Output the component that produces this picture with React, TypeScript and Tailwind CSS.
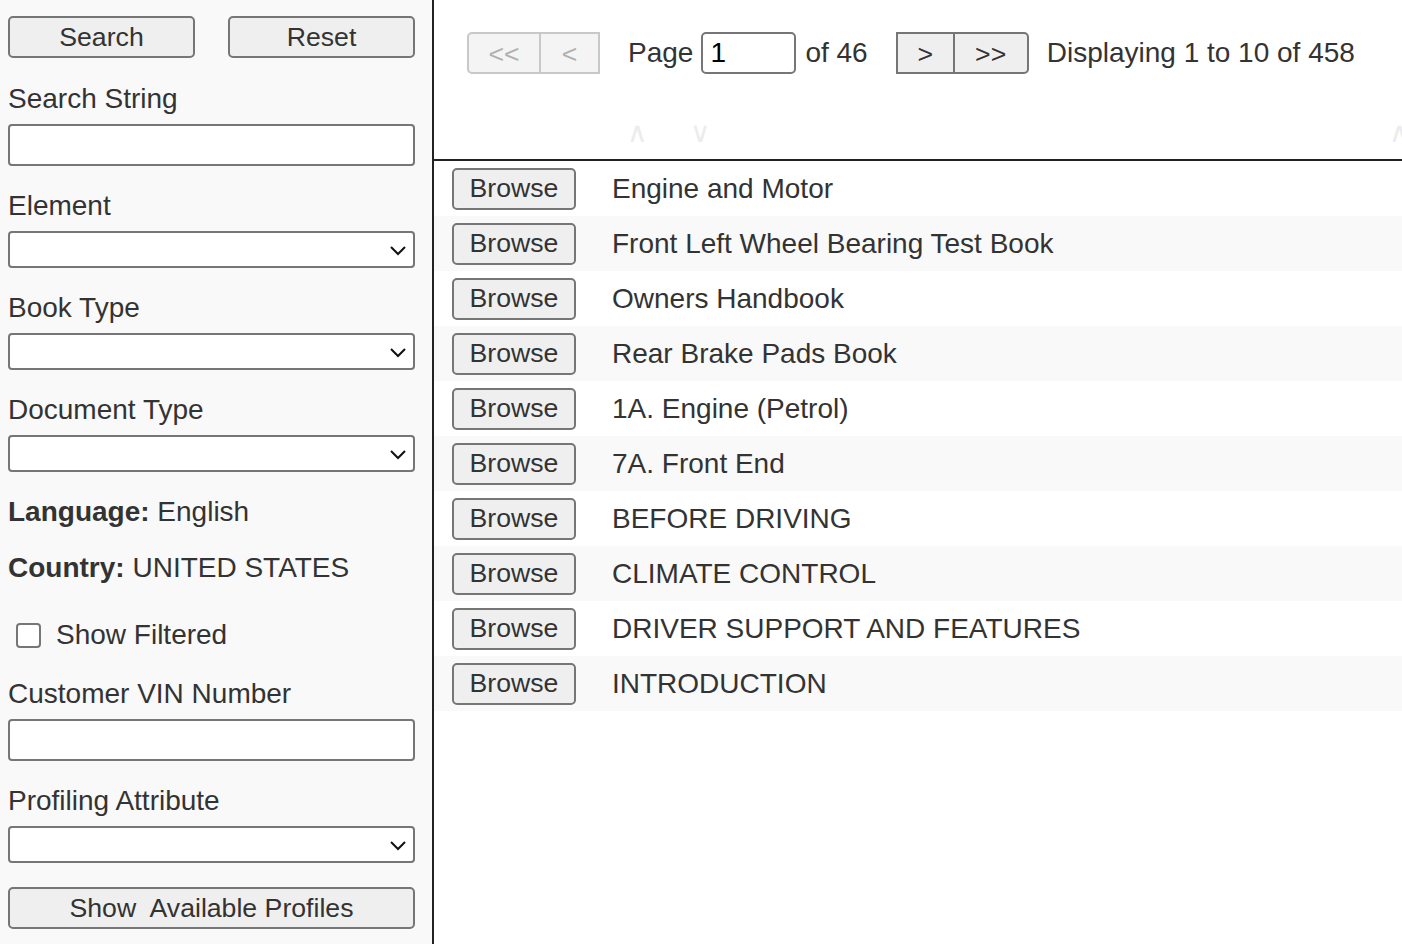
import React from "react";

const rows = [
  "Engine and Motor",
  "Front Left Wheel Bearing Test Book",
  "Owners Handbook",
  "Rear Brake Pads Book",
  "1A. Engine (Petrol)",
  "7A. Front End",
  "BEFORE DRIVING",
  "CLIMATE CONTROL",
  "DRIVER SUPPORT AND FEATURES",
  "INTRODUCTION",
];

function Chevron() {
  return (
    <svg
      width="18"
      height="12"
      viewBox="0 0 18 12"
      className="pointer-events-none absolute right-[8px] top-1/2 -translate-y-1/2"
    >
      <polyline points="2,3 9,10 16,3" fill="none" stroke="#111" strokeWidth="2" />
    </svg>
  );
}

function Select() {
  return (
    <div className="relative">
      <select className="block h-[37px] w-full appearance-none rounded-[4px] border-2 border-[#767676] bg-white" />
      <Chevron />
    </div>
  );
}

function Label({ children }: { children: React.ReactNode }) {
  return <div className="mb-[9px] text-[28px] leading-[32px]">{children}</div>;
}

const btn =
  "h-[42px] rounded-[5px] border-2 border-[#767676] bg-[#efefef] text-[26.67px] leading-none text-[#333]";

export default function App() {
  return (
    <div className="flex min-h-[944px] font-['Liberation_Sans',Arial,sans-serif] text-[#333]">
      <aside className="w-[434px] shrink-0 border-r-2 border-[#222] bg-[#f9f9f9] pl-[8px] pr-[17px] pt-[16px]">
        <div className="flex justify-between">
          <button className={`${btn} w-[187px]`}>Search</button>
          <button className={`${btn} w-[187px]`}>Reset</button>
        </div>

        <div className="mt-[25px]">
          <Label>Search String</Label>
          <input className="block h-[42px] w-full rounded-[4px] border-2 border-[#767676] bg-white" />
        </div>

        <div className="mt-[24px]">
          <Label>Element</Label>
          <Select />
        </div>

        <div className="mt-[24px]">
          <Label>Book Type</Label>
          <Select />
        </div>

        <div className="mt-[24px]">
          <Label>Document Type</Label>
          <Select />
        </div>

        <p className="mt-[24px] text-[28px] leading-[32px]">
          <span className="font-bold">Language:</span> English
        </p>
        <p className="mt-[24px] text-[28px] leading-[32px]">
          <span className="font-bold">Country:</span> UNITED STATES
        </p>

        <label className="mt-[35px] flex items-center gap-[15px] pl-[8px] text-[28px] leading-[32px]">
          <span className="block h-[25px] w-[25px] rounded-[4px] border-2 border-[#767676] bg-white" />
          Show Filtered
        </label>

        <div className="mt-[27px]">
          <Label>Customer VIN Number</Label>
          <input className="block h-[42px] w-full rounded-[4px] border-2 border-[#767676] bg-white" />
        </div>

        <div className="mt-[24px]">
          <Label>Profiling Attribute</Label>
          <Select />
        </div>

        <button className={`${btn} mt-[24px] w-full whitespace-pre`}>Show  Available Profiles</button>
      </aside>

      <main className="flex-1 overflow-hidden bg-white">
        <div className="relative h-[161px] border-b-2 border-[#222]">
          <div className="flex items-center pl-[33px] pt-[32px] text-[28px]">
            <div className="flex h-[42px]">
              <button className="w-[74px] rounded-l-[5px] border-2 border-[#c8c8c8] bg-[#f4f4f4] text-[26.67px] text-[#b0b0b0]">
                &lt;&lt;
              </button>
              <button className="w-[59px] border-2 border-l-0 border-[#c8c8c8] bg-[#f4f4f4] text-[26.67px] text-[#b0b0b0]">
                &lt;
              </button>
            </div>
            <span className="ml-[28px]">Page</span>
            <div className="ml-[8px] flex h-[42px] w-[95px] items-center rounded-[5px] border-2 border-[#767676] bg-white pl-[7px] text-black">
              1
            </div>
            <span className="ml-[9px]">of 46</span>
            <div className="ml-[28px] flex h-[42px]">
              <button className="w-[59px] border-2 border-[#767676] bg-[#efefef] text-[26.67px] text-[#333]">
                &gt;
              </button>
              <button className="w-[74px] rounded-r-[5px] border-2 border-l-0 border-[#767676] bg-[#efefef] text-[26.67px] text-[#333]">
                &gt;&gt;
              </button>
            </div>
            <span className="ml-[18px]">Displaying 1 to 10 of 458</span>
          </div>
          <div className="mt-[43px] flex pl-[193px] text-[28px] leading-[32px] text-[#ececec]">
            <span>∧</span>
            <span className="ml-[42px]">∨</span>
          </div>
          <span className="absolute right-[-8px] top-[117px] text-[28px] leading-[32px] text-[#ececec]">∧</span>
        </div>

        <div>
          {rows.map((r, i) => (
            <div
              key={r}
              className={`flex h-[55px] items-center pl-[18px] ${i % 2 === 1 ? "bg-[#f9f9f9]" : "bg-white"}`}
            >
              <button className={`${btn} w-[124px]`}>Browse</button>
              <span className="ml-[36px] text-[28px]">{r}</span>
            </div>
          ))}
        </div>
      </main>
    </div>
  );
}
